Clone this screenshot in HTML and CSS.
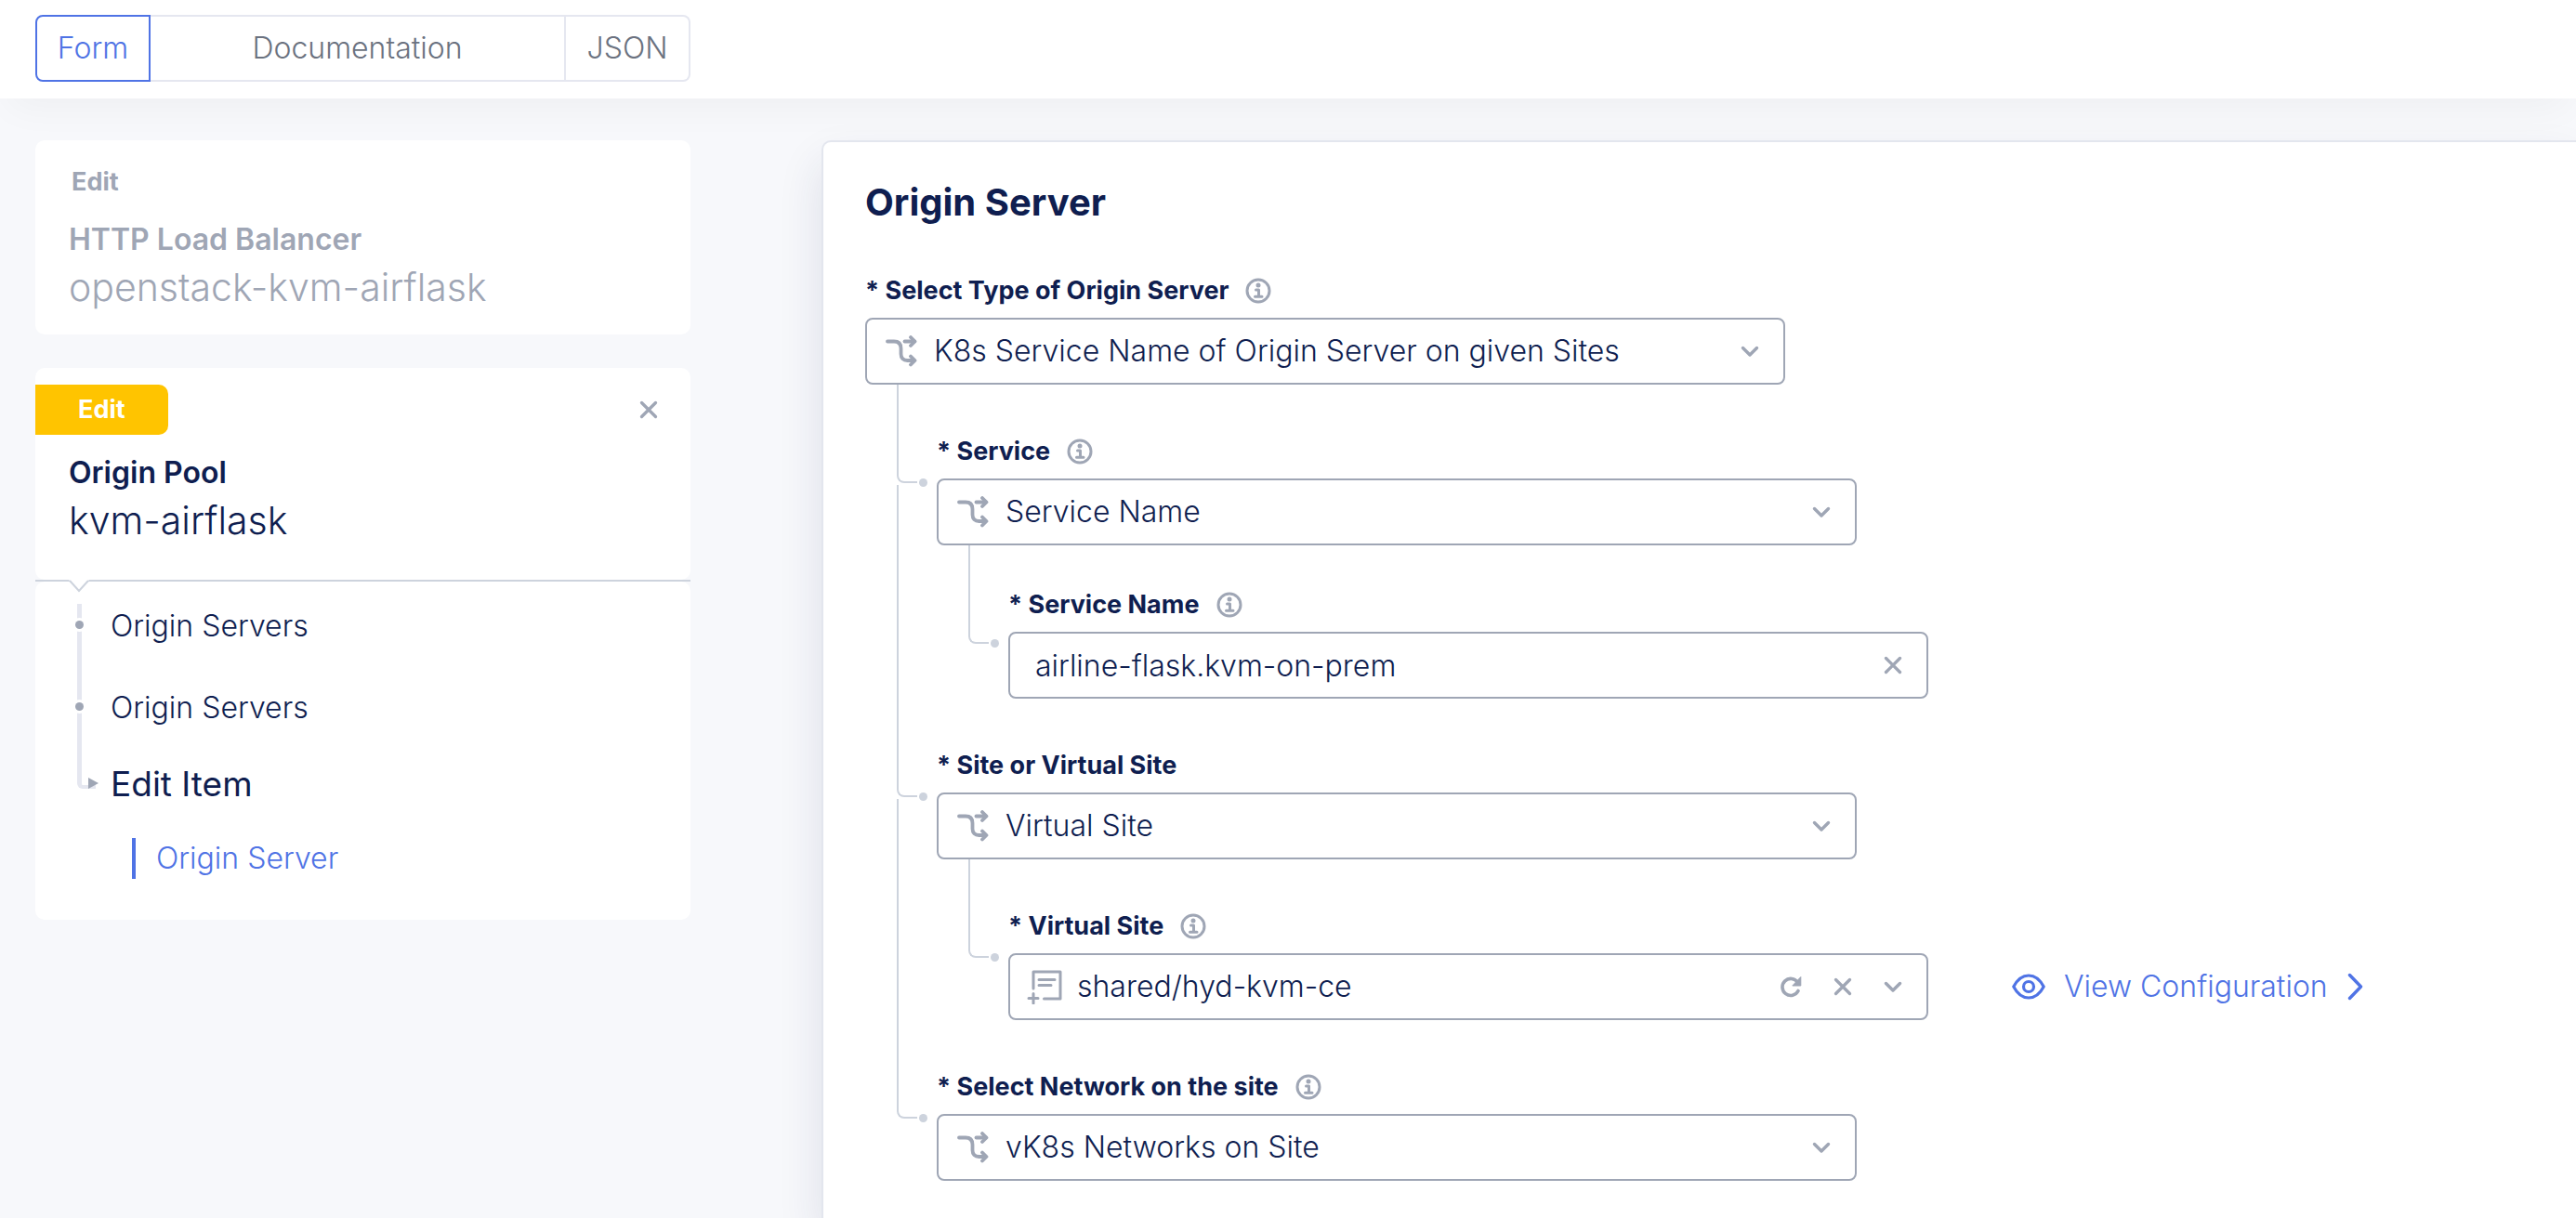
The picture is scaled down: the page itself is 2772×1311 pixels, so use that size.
FILE: index.html
```html
<!DOCTYPE html>
<html lang="en">
<head>
<meta charset="utf-8">
<meta name="viewport" content="width=device-width, initial-scale=1">
<title>Origin Server</title>
<link rel="stylesheet" href="styles.css">
</head>
<body>
<svg class="sprite" aria-hidden="true">
  <symbol id="i-info" viewBox="0 0 28 28">
    <circle cx="14" cy="14" r="12" fill="none" stroke="currentColor" stroke-width="3"/>
    <circle cx="14" cy="8" r="2.5" fill="currentColor"/>
    <path d="M11.500 13h3v7M10.500 20.200h7.500" fill="none" stroke="currentColor" stroke-width="3" stroke-linecap="round" stroke-linejoin="round"/>
  </symbol>
  <symbol id="i-branch" viewBox="0 0 34 34">
    <g fill="none" stroke="currentColor" stroke-width="3.800" stroke-linecap="round" stroke-linejoin="round">
      <path d="M2 6.500h7c5 0 7.500 2.500 7.500 7.500v6c0 4.500 2.500 7 7 7h7"/>
      <path d="M20.500 6.500H31"/>
      <path d="M27 2l4.500 4.500L27 11M27 22.500l4.500 4.500-4.500 4.500"/>
    </g>
  </symbol>
  <symbol id="i-list" viewBox="0 0 38 38">
    <g fill="none" stroke="currentColor" stroke-width="3" stroke-linecap="round" stroke-linejoin="round">
      <path d="M7 21V3h29v29H18.500"/>
      <path d="M13 11.500h17M13 17.500h13"/>
      <path d="M7 26.500v10.500M2 31.500h10"/>
    </g>
  </symbol>
  <symbol id="i-chevron" viewBox="0 0 20 20">
    <path d="M2.500 6.500l7.500 7.500 7.500-7.500" fill="none" stroke="currentColor" stroke-width="3.400" stroke-linecap="round" stroke-linejoin="round"/>
  </symbol>
  <symbol id="i-close" viewBox="0 0 20 20">
    <path d="M2.500 2.500l15 15M17.500 2.500l-15 15" fill="none" stroke="currentColor" stroke-width="3.300" stroke-linecap="round"/>
  </symbol>
  <symbol id="i-refresh" viewBox="0 0 24 24">
    <path d="M20 16.500a9 9 0 1 1-.5-9" fill="none" stroke="currentColor" stroke-width="3.600" stroke-linecap="round"/>
    <path d="M22.800 1.500v9.500h-9z" fill="currentColor" stroke="currentColor"/>
  </symbol>
  <symbol id="i-eye" viewBox="0 0 36 28">
    <g fill="none" stroke="currentColor" stroke-width="3.200">
      <path d="M1.800 14C6 6 11.500 2 18 2s12 4 16.200 12C30 22 24.500 26 18 26S6 22 1.800 14z" stroke-linejoin="round"/>
      <circle cx="18" cy="14" r="5.500"/>
    </g>
  </symbol>
  <symbol id="i-next" viewBox="0 0 18 30">
    <path d="M3.500 2.500L15.500 15l-12 12.500" fill="none" stroke="currentColor" stroke-width="3.400" stroke-linecap="round" stroke-linejoin="round"/>
  </symbol>
</svg>

<header class="topbar">
  <div class="tabs" role="tablist">
    <button class="tab tab--active" type="button" role="tab" aria-selected="true">Form</button>
    <button class="tab tab--wide" type="button" role="tab" aria-selected="false">Documentation</button>
    <button class="tab" type="button" role="tab" aria-selected="false">JSON</button>
  </div>
</header>

<main class="layout">
  <aside class="trail">
    <section class="card card--muted">
      <span class="badge badge--plain">Edit</span>
      <h2 class="card__kind">HTTP Load Balancer</h2>
      <p class="card__name">openstack-kvm-airflask</p>
    </section>

    <section class="stack">
      <div class="card">
        <div class="card__bar">
          <span class="badge">Edit</span>
          <button class="icon-button" type="button" aria-label="Close"><svg class="icon-small"><use href="#i-close"/></svg></button>
        </div>
        <h2 class="card__kind">Origin Pool</h2>
        <p class="card__name">kvm-airflask</p>
      </div>
      <div class="divider">
        <svg class="divider__notch" viewBox="0 0 22 14"><path d="M0 0h22L11 12z" fill="#fff"/><path d="M1 1l10 11L21 1" fill="none" stroke="#cdd3dd" stroke-width="2"/></svg>
      </div>
      <ul class="steps">
        <li class="step"><a href="#servers">Origin Servers</a></li>
        <li class="step"><a href="#server-list">Origin Servers</a></li>
        <li class="step step--current"><a href="#item">Edit Item</a></li>
        <li class="step step--sub"><a href="#origin-server">Origin Server</a></li>
      </ul>
    </section>
  </aside>

  <form class="panel" id="origin-server">
    <h1 class="panel__title">Origin Server</h1>
    <div class="field">
      <div class="field__head">
        <label for="type">* Select Type of Origin Server</label>
        <button class="icon-button" type="button" aria-label="Help"><svg class="icon-info"><use href="#i-info"/></svg></button>
      </div>
      <div class="control">
        <svg class="icon-lead"><use href="#i-branch"/></svg>
        <select id="type"><option>K8s Service Name of Origin Server on given Sites</option></select>
        <svg class="icon-small"><use href="#i-chevron"/></svg>
      </div>

      <div class="children">
        <div class="field field--child">
          <span class="elbow"></span>
          <div class="field__head">
            <label for="service">* Service</label>
            <button class="icon-button" type="button" aria-label="Help"><svg class="icon-info"><use href="#i-info"/></svg></button>
          </div>
          <div class="control">
            <svg class="icon-lead"><use href="#i-branch"/></svg>
            <select id="service"><option>Service Name</option></select>
            <svg class="icon-small"><use href="#i-chevron"/></svg>
          </div>
          <div class="children">
            <div class="field field--child field--text">
              <span class="elbow"></span>
              <div class="field__head">
                <label for="service-name">* Service Name</label>
                <button class="icon-button" type="button" aria-label="Help"><svg class="icon-info"><use href="#i-info"/></svg></button>
              </div>
              <div class="control">
                <input id="service-name" type="text" value="airline-flask.kvm-on-prem">
                <button class="icon-button" type="button" aria-label="Clear"><svg class="icon-small"><use href="#i-close"/></svg></button>
              </div>
            </div>
          </div>
        </div>

        <div class="field field--child">
          <span class="elbow"></span>
          <div class="field__head">
            <label for="site">* Site or Virtual Site</label>
          </div>
          <div class="control">
            <svg class="icon-lead"><use href="#i-branch"/></svg>
            <select id="site"><option>Virtual Site</option></select>
            <svg class="icon-small"><use href="#i-chevron"/></svg>
          </div>
          <div class="children">
            <div class="field field--child">
              <span class="elbow"></span>
              <div class="field__head">
                <label for="virtual-site">* Virtual Site</label>
                <button class="icon-button" type="button" aria-label="Help"><svg class="icon-info"><use href="#i-info"/></svg></button>
              </div>
              <div class="field__row">
                <div class="control control--reference">
                  <svg class="icon-list"><use href="#i-list"/></svg>
                  <select id="virtual-site"><option>shared/hyd-kvm-ce</option></select>
                  <button class="icon-button" type="button" aria-label="Refresh"><svg class="icon-refresh"><use href="#i-refresh"/></svg></button>
                  <button class="icon-button" type="button" aria-label="Clear"><svg class="icon-small"><use href="#i-close"/></svg></button>
                  <svg class="icon-small"><use href="#i-chevron"/></svg>
                </div>
                <a class="view-link" href="#configuration">
                  <svg class="icon-eye"><use href="#i-eye"/></svg>
                  <span>View Configuration</span>
                  <svg class="icon-next"><use href="#i-next"/></svg>
                </a>
              </div>
            </div>
          </div>
        </div>

        <div class="field field--child">
          <span class="elbow"></span>
          <div class="field__head">
            <label for="network">* Select Network on the site</label>
            <button class="icon-button" type="button" aria-label="Help"><svg class="icon-info"><use href="#i-info"/></svg></button>
          </div>
          <div class="control">
            <svg class="icon-lead"><use href="#i-branch"/></svg>
            <select id="network"><option>vK8s Networks on Site</option></select>
            <svg class="icon-small"><use href="#i-chevron"/></svg>
          </div>
        </div>
      </div>
    </div>
  </form>
</main>
</body>
</html>
```
FILE: styles.css
```css
:root {
  --navy: #0f1e50;
  --blue: #4f73e5;
  --grey: #9fa6b5;
  --slate: #6b7280;
  --line: #cdd3dd;
  --soft: #e5e7f0;
}

* {
  box-sizing: border-box;
}

body {
  margin: 0;
  min-height: 100vh;
  display: flex;
  flex-direction: column;
  background: #f7f8fb;
  color: var(--navy);
  font: 300 32px/40px Inter, "Liberation Sans", sans-serif;
}

h1, h2, p, ul {
  margin: 0;
  padding: 0;
}

button, input, select {
  font: inherit;
  color: inherit;
  background: none;
  border: 0;
  padding: 0;
  margin: 0;
}

a {
  color: inherit;
  text-decoration: none;
}

svg {
  display: block;
  flex: none;
}

.sprite {
  position: absolute;
  width: 0;
  height: 0;
}

/* Top bar */
.topbar {
  padding: 16px 38px 18px;
  background: #fff;
  box-shadow: 0 20px 40px -10px rgba(30, 30, 30, 0.04);
}

.tabs {
  display: flex;
  max-width: 705px;
  height: 72px;
}

.tab {
  width: 134px;
  border: 2px solid var(--soft);
  border-left-width: 0;
  color: var(--slate);
}

.tab--wide {
  flex: 1;
}

.tab:last-child {
  border-radius: 0 8px 8px 0;
}

.tab--active {
  width: 124px;
  border: 2px solid var(--blue);
  border-radius: 8px 0 0 8px;
  color: var(--blue);
}

/* Page columns */
.layout {
  flex: 1;
  display: grid;
  grid-template-columns: minmax(0, 705px) minmax(0, 1fr);
  gap: 141px;
  padding: 45px 0 0 38px;
}

.trail {
  display: flex;
  flex-direction: column;
  gap: 36px;
}

.card {
  padding: 18px 0 33px;
  border-radius: 10px;
  background: #fff;
}

.card--muted {
  padding-bottom: 20px;
  color: var(--grey);
}

.card__bar {
  display: flex;
  align-items: center;
  justify-content: space-between;
  padding-right: 35px;
  margin-bottom: 6px;
}

.badge {
  display: block;
  padding: 0 46px;
  border-radius: 0 10px 10px 0;
  background: #ffc400;
  color: #fff;
  font-size: 27px;
  line-height: 54px;
  font-weight: 700;
}

.badge--plain {
  padding: 0 39px;
  background: none;
  color: inherit;
}

.card__kind {
  padding: 15px 36px 0;
  font-size: 32px;
  line-height: 40px;
  font-weight: 600;
}

.card__name {
  padding: 0 36px;
  font-size: 41px;
  line-height: 62px;
}

.divider {
  position: relative;
  height: 2px;
  background: var(--line);
}

.divider__notch {
  position: absolute;
  top: 0;
  left: 36px;
  width: 22px;
  height: 14px;
}

/* Step list */
.steps {
  display: flex;
  flex-direction: column;
  gap: 40px;
  padding: 24px 0 44px 81px;
  border-radius: 10px;
  background: #fff;
  list-style: none;
}

.step {
  position: relative;
  line-height: 48px;
}

.step::before {
  content: "";
  position: absolute;
  left: -36px;
  top: 0;
  bottom: -40px;
  width: 5px;
  background: var(--soft);
}

.step::after {
  content: "";
  position: absolute;
  left: -38px;
  top: 18px;
  width: 9px;
  height: 9px;
  border-radius: 50%;
  background: var(--grey);
  box-shadow: 0 0 0 3px #fff;
}

.step--current {
  font-size: 37px;
  line-height: 36px;
  font-weight: 400;
}

.step--current::before {
  bottom: auto;
  width: 15px;
  height: 19px;
  background: none;
  border: solid var(--soft);
  border-width: 0 0 4px 5px;
  border-radius: 0 0 0 6px;
}

.step--current::after {
  left: -24px;
  top: 11px;
  width: 11px;
  height: 12px;
  border-radius: 0;
  box-shadow: none;
  clip-path: polygon(0 0, 100% 50%, 0 100%);
}

.step--sub {
  display: flex;
  padding-left: 23px;
  color: var(--blue);
}

.step--sub::before,
.step--sub::after {
  content: none;
}

.step--sub a {
  padding-left: 22px;
  border-left: 4px solid var(--blue);
  line-height: 44px;
}

/* Form panel */
.panel {
  padding: 41px 46px 40px 45px;
  border: 2px solid #e3e6ee;
  border-width: 2px 0 0 2px;
  border-radius: 10px 0 0 0;
  background: #fff;
  box-shadow: 0 24px 48px rgba(30, 40, 90, 0.12);
}

.panel__title {
  font-size: 40px;
  line-height: 48px;
  font-weight: 700;
}

.field {
  padding-top: 55px;
}

.field--child {
  position: relative;
  padding-top: 56px;
}

.field--text {
  padding-top: 48px;
}

.field__head {
  display: flex;
  align-items: center;
  gap: 18px;
  margin-bottom: 13px;
  font-size: 27px;
  line-height: 32px;
  font-weight: 700;
}

.field__row {
  display: flex;
  align-items: center;
  gap: 90px;
}

.control {
  display: flex;
  align-items: center;
  gap: 18px;
  width: 100%;
  max-width: 990px;
  height: 72px;
  padding: 0 26px 0 20px;
  border: 2px solid var(--grey);
  border-radius: 8px;
  color: var(--grey);
}

.control select,
.control input {
  flex: 1;
  min-width: 0;
  height: 100%;
  appearance: none;
  outline: 0;
  color: var(--navy);
}

.control--reference {
  gap: 34px;
  padding-left: 18px;
}

.control--reference select {
  margin-left: -18px;
}

.field--text .control {
  padding-left: 27px;
}

.children {
  padding-left: 77px;
}

/* Connector from the parent control down to this field */
.elbow {
  position: absolute;
  left: -43px;
  top: 0;
  width: 22px;
  height: 106px;
  border: solid var(--line);
  border-width: 0 0 2px 2px;
  border-radius: 0 0 0 8px;
}

.elbow::after {
  content: "";
  position: absolute;
  right: -11px;
  bottom: -6px;
  width: 9px;
  height: 9px;
  border-radius: 50%;
  background: var(--line);
}

.field--child:not(:last-child)::after {
  content: "";
  position: absolute;
  left: -43px;
  top: 108px;
  bottom: 0;
  width: 2px;
  background: var(--line);
}

.view-link {
  display: flex;
  align-items: center;
  gap: 20px;
  color: var(--blue);
  white-space: nowrap;
}

/* Icons */
.icon-button {
  display: block;
  color: var(--grey);
  cursor: pointer;
}

.icon-info {
  width: 28px;
  height: 28px;
}

.icon-lead {
  width: 34px;
  height: 34px;
}

.icon-list {
  width: 38px;
  height: 38px;
}

.icon-small {
  width: 20px;
  height: 20px;
}

.icon-refresh {
  width: 24px;
  height: 24px;
}

.icon-eye {
  width: 36px;
  height: 28px;
}

.icon-next {
  width: 18px;
  height: 30px;
}
```
